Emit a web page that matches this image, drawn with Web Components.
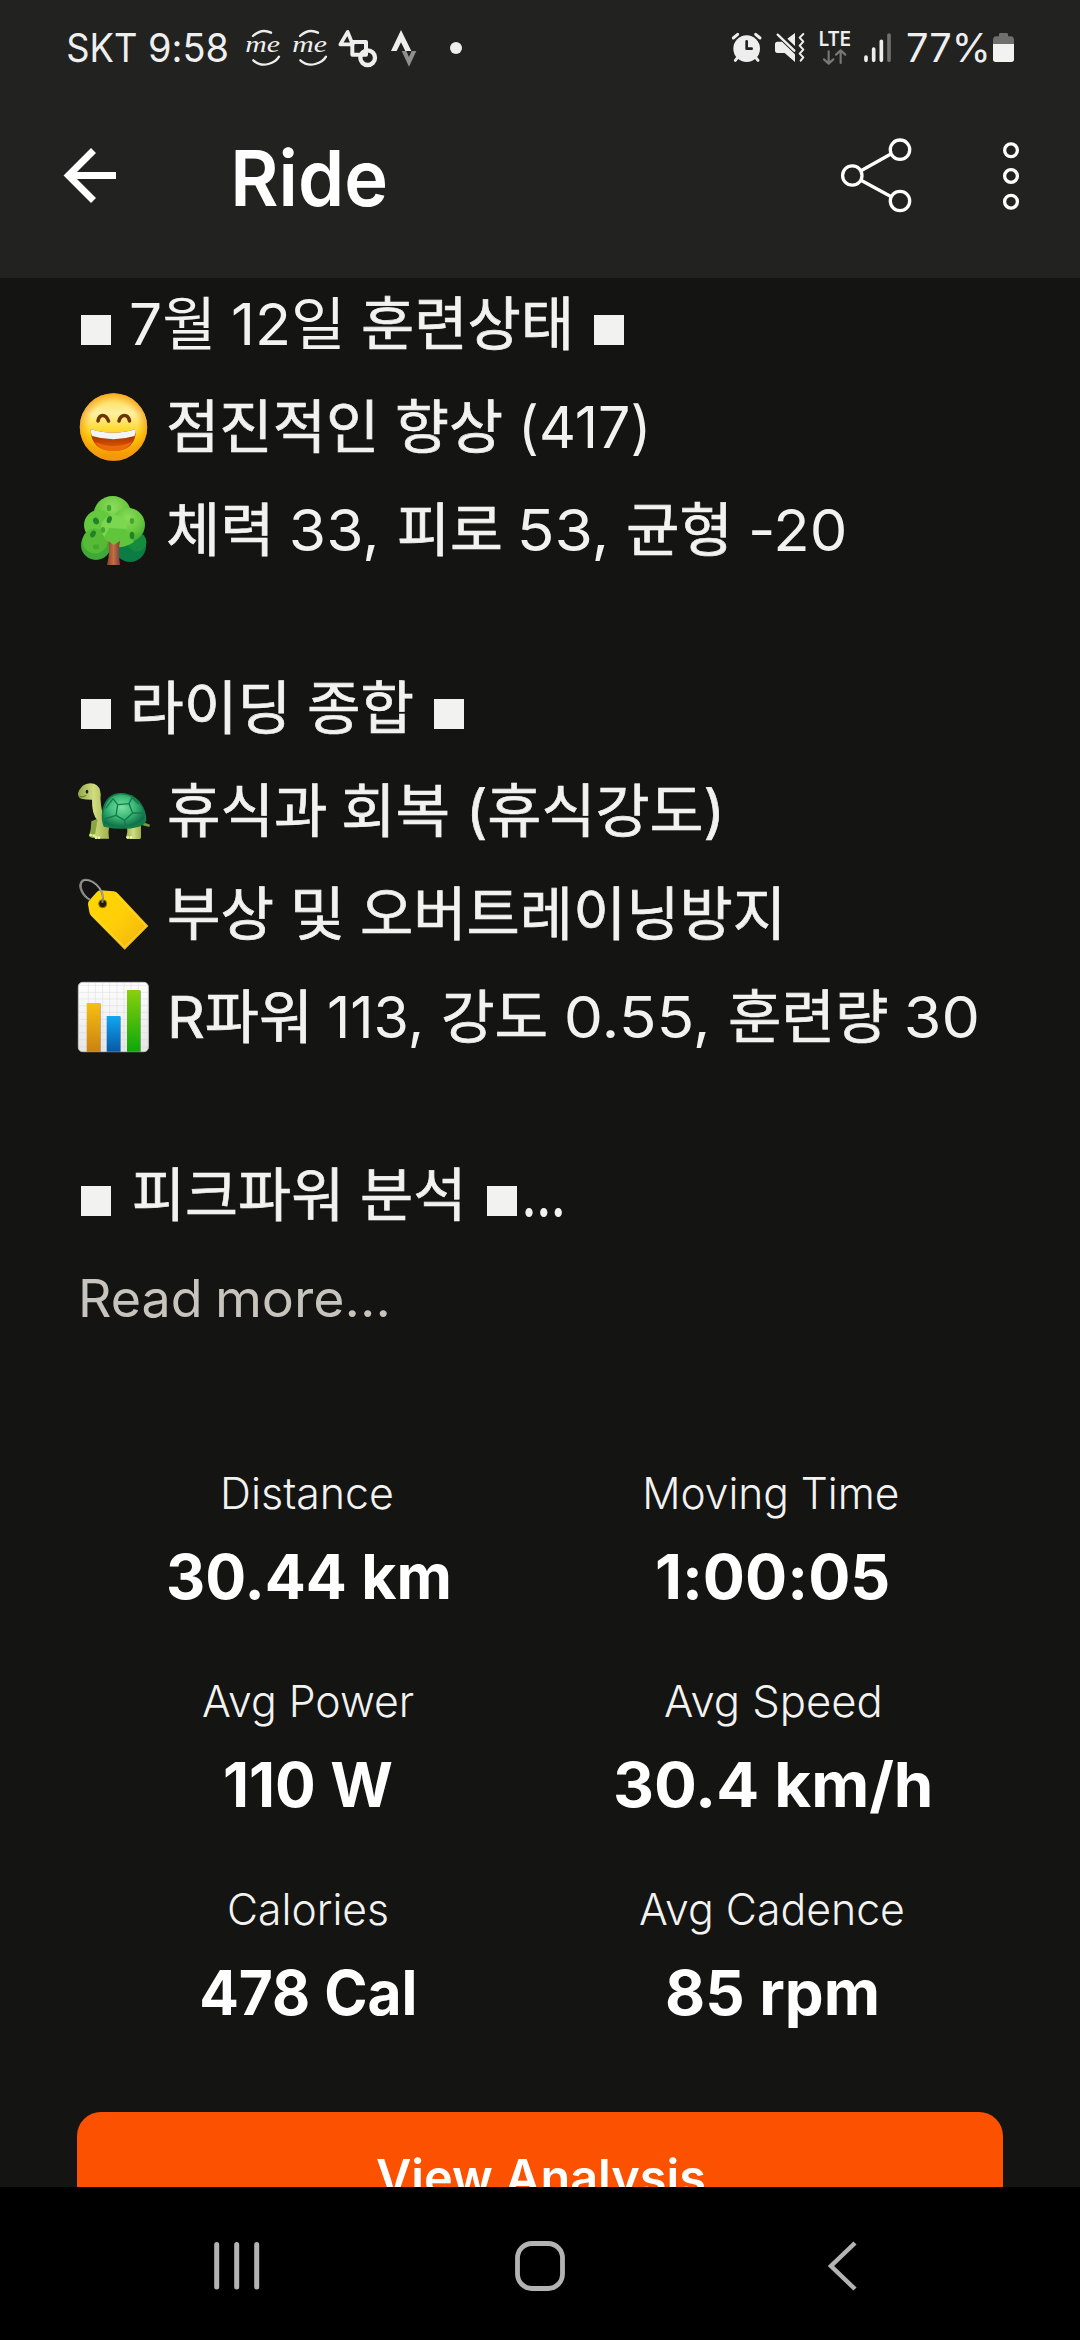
<!DOCTYPE html>
<html lang="ko">
<head>
<meta charset="utf-8">
<title>Ride</title>
<style>
html,body{margin:0;padding:0;background:#141412}
body{width:1080px;height:2340px;overflow:hidden;font-family:Inter,"Noto Sans CJK KR",sans-serif}
</style>
</head>
<body>
<ride-app></ride-app>
<script>
const FAMILY = 'Inter,"Noto Sans CJK KR",sans-serif';
const ctx = document.createElement('canvas').getContext('2d');

// A run of text whose box is its ink: width from "w", bottom edge on the baseline.
class FitText extends HTMLElement {
  connectedCallback() {
    if (this.shadowRoot) return;
    const root = this.attachShadow({ mode: 'open' });
    const size = +this.getAttribute('size') || 58;
    const weight = this.getAttribute('weight') || 400;
    const family = this.getAttribute('family') || FAMILY;
    const w = +this.getAttribute('w');
    const gap = +this.getAttribute('gap') || 0;
    const h = Math.round(size * 0.727);
    ctx.font = `${weight} ${size}px ${family}`;
    const text = this.textContent;
    const m = ctx.measureText(text);
    const ink = m.actualBoundingBoxLeft + m.actualBoundingBoxRight;
    const s = w / ink;
    const ty = h / 2 - (m.fontBoundingBoxAscent - m.fontBoundingBoxDescent) / 2;
    // Hangul strokes are thinner than the Latin ones at the same weight.
    const stroke = /[가-힣]/.test(text) && !/[0-9]/.test(text) ? '.7px' : '0';
    root.innerHTML = `<style>
      :host{display:block;flex:none;width:${w}px;height:${h}px;margin-left:${gap}px}
      span{display:block;width:max-content;white-space:pre;font:${weight} ${size}px/${h}px ${family};
        font-feature-settings:"calt" 0;-webkit-text-stroke:${stroke} currentColor;transform-origin:0 0;
        transform:translate(${(m.actualBoundingBoxLeft * s).toFixed(2)}px,${ty.toFixed(2)}px) scaleX(${s.toFixed(4)})}
    </style><span><slot></slot></span>`;
  }
}

const ICONS = {
  me: `<g fill="none" stroke="#eee" stroke-width="7" stroke-linecap="round"><path d="M609 78Q635 54 663 68"/><path d="M610 151Q630 169 655 162Q678 156 687 140"/></g>
    <text x="586" y="126" textLength="104" lengthAdjust="spacingAndGlyphs" font-family="Liberation Serif" font-style="italic" font-size="70" fill="#eee">me</text>`,
  shapes: `<g fill="none" stroke="#eee" stroke-linejoin="round"><path stroke-width="11" d="M893 66L871 103H908Z"/><rect stroke-width="12" x="907" y="96" width="41" height="38"/><circle stroke-width="13" cx="953" cy="143" r="22"/></g>`,
  strava: `<path fill="#8f8f8e" d="M1056 123H1070L1078 141L1086 123H1100L1078 170Z"/><path fill="#eee" d="M1054 60L1085 123H1067L1054 97L1041 123H1024Z"/>`,
  dot: `<circle cx="1218" cy="114" r="18" fill="#eee"/>`,
  alarm: `<g stroke="#eee" stroke-width="9" stroke-linecap="round"><path d="M100 84L113 73M180 84L167 73M115 140L106 151M165 140L174 151"/></g><circle cx="140" cy="116" r="40" fill="#eee"/><path d="M140 94V116H155" fill="none" stroke="#222220" stroke-width="8" stroke-linecap="round" stroke-linejoin="round"/>`,
  mute: `<path fill="#eee" d="M285 69V108L262 86ZM232 95H246L285 133V156L254 129H232Q225 129 225 121V103Q225 95 232 95Z"/><path stroke="#eee" stroke-width="7" stroke-linecap="round" d="M233 74L283 122"/><path fill="none" stroke="#eee" stroke-width="6" stroke-linecap="round" stroke-linejoin="round" d="M310 72L299 83L310 95L299 107L310 119L299 131L310 142L302 152"/>`,
  lte: `<text x="357" y="109" textLength="97" lengthAdjust="spacingAndGlyphs" font-family="Inter" font-weight="600" font-size="59" fill="#eee">LTE</text><path fill="none" stroke="#777775" stroke-width="6.5" stroke-linecap="round" stroke-linejoin="round" d="M387 124V160M373 148L387 161L401 148M423 159V122M409 134L423 121L437 134"/>`,
  signal: `<g stroke-width="11" stroke-linecap="round" stroke="#eee"><path d="M498 141V151M521 117V151M544 94V151"/><path stroke="#6f6f6d" d="M567 75V151"/></g>`,
  battery: `<path fill="#6f6f6d" d="M897 73Q897 69 901 69H920Q924 69 924 73V79H932Q942 80 942 90V102H879V90Q879 80 889 79H897Z"/><path fill="#f2f2f2" d="M879 102H942V148Q942 156 934 156H887Q879 156 879 148Z"/>`,
  back: `<path fill="none" stroke="#fff" stroke-width="7" d="M51.500 2.500L26.500 27.500L51.500 52.500" transform="translate(-22 -1)"/><path stroke="#fff" stroke-width="7" d="M6 26.500H52"/>`,
  share: `<g fill="none" stroke="#fff" stroke-width="3.300"><circle cx="11.300" cy="37.500" r="9.700"/><circle cx="59" cy="11.700" r="9.700"/><circle cx="59" cy="63" r="9.700"/><path d="M20 32.700L50.300 15.800M20 42.200L50.300 58.700"/></g>`,
  more: `<g fill="none" stroke="#fff" stroke-width="3.300"><circle cx="8" cy="8.300" r="6.400"/><circle cx="8" cy="34" r="6.400"/><circle cx="8" cy="59.700" r="6.400"/></g>`,
  recents: `<path stroke="#b3b3b3" stroke-width="5" stroke-linecap="round" d="M2.700 3.500V46M22.700 3.500V46M42.700 3.500V46"/>`,
  home: `<rect x="2.500" y="2.500" width="45" height="45" rx="14.500" fill="none" stroke="#b3b3b3" stroke-width="4.800"/>`,
  navback: `<path fill="none" stroke="#b3b3b3" stroke-width="4.500" d="M28 2L4 25L28 48"/>`,
  smile: `<defs><linearGradient id="a" x2="0" y2="1"><stop stop-color="#ffd94a"/><stop offset=".3" stop-color="#fff0a0"/><stop offset=".62" stop-color="#ffd20a"/><stop offset="1" stop-color="#f08a00"/></linearGradient><radialGradient id="e" r=".5"><stop offset=".72" stop-color="#f8a010" stop-opacity="0"/><stop offset="1" stop-color="#f59a10" stop-opacity=".75"/></radialGradient><linearGradient id="m" x2="0" y2="1"><stop stop-color="#8c1e00"/><stop offset="1" stop-color="#e86400"/></linearGradient></defs>
    <circle cx="35.500" cy="36" r="33.700" fill="url(#a)"/><circle cx="35.500" cy="36" r="33.700" fill="url(#e)"/>
    <path d="M20 30Q21 24.500 24.700 24.500Q28.500 24.500 30.500 30M41 30Q42.500 24.500 46.500 24.500Q50.500 24.500 51.500 30" fill="none" stroke="#6b3400" stroke-width="3.500" stroke-linecap="round"/>
    <path d="M12.500 38Q35 45.500 58 38Q58 60 35.500 60Q13 60 12.500 38Z" fill="url(#m)"/><path d="M12.500 38Q35 45.500 58 38Q58 42 56.500 45Q35.500 51.500 14 45Q12.500 42 12.500 38Z" fill="#f4f4f4"/><path d="M17 51Q35 59 54 51Q48 60 35.500 60Q23 60 17 51Z" fill="#ee6a08"/>`,
  tree: `<defs><radialGradient id="a" cx=".5" cy=".3" r=".65"><stop stop-color="#8ddc5c"/><stop offset=".65" stop-color="#65c63c"/><stop offset="1" stop-color="#45ae36"/></radialGradient><linearGradient id="t" x2="1"><stop stop-color="#8d3f2c"/><stop offset=".5" stop-color="#c0703e"/><stop offset="1" stop-color="#853744"/></linearGradient></defs>
    <circle cx="52" cy="52" r="16" fill="#0b7c43"/><circle cx="18" cy="51" r="15" fill="#3ea936"/><circle cx="59" cy="48" r="9.500" fill="#158b3d"/>
    <circle cx="34.500" cy="21" r="19" fill="url(#a)"/><circle cx="21" cy="31" r="15" fill="#65c93e"/><circle cx="17" cy="47" r="12.500" fill="#56ba36"/><circle cx="50" cy="31" r="17" fill="url(#a)"/><circle cx="36" cy="34" r="13" fill="#7bd650"/><path d="M26 44Q38 60 56 48L48 35L31 34Z" fill="#61c53b"/>
    <path d="M30.500 47L35.500 51L42 47Q40 56 42 71H29Q32 60 30.500 47Z" fill="url(#t)"/>
    <g fill="#23812b"><ellipse cx="18" cy="27" rx="2.800" ry="3.500" transform="rotate(-30 18 27)"/><ellipse cx="31.500" cy="25.500" rx="2.400" ry="3.700" transform="rotate(20 31 25)"/><ellipse cx="15" cy="40" rx="2.500" ry="3.700" transform="rotate(30 15 40)"/><ellipse cx="54" cy="41.500" rx="2.300" ry="3.700"/></g><g fill="#43a82c"><ellipse cx="31" cy="14" rx="2.200" ry="3.200"/><ellipse cx="54" cy="27" rx="2.200" ry="3"/><ellipse cx="25" cy="36" rx="2.200" ry="3"/><ellipse cx="18" cy="53" rx="3" ry="2.400"/></g>`,
  turtle: `<defs><linearGradient id="n" x2="1"><stop stop-color="#90a848"/><stop offset=".5" stop-color="#d2dc80"/><stop offset="1" stop-color="#9bb14a"/></linearGradient><radialGradient id="s" cx=".45" cy=".4" r=".62"><stop stop-color="#79e2a0"/><stop offset=".5" stop-color="#3cbb79"/><stop offset="1" stop-color="#0d7047"/></radialGradient></defs>
    <path d="M250 487L270 494L268 501L248 496Z" fill="#789d3a"/>
    <path d="M94 484L112 476L108 530Q98 538 87 529Q94 510 94 484Z" fill="#8ba544"/>
    <path d="M196 488H243V530Q244 537 236 537H202Q196 533 200 525Q205 510 196 488Z" fill="url(#n)"/>
    <path d="M54 400Q57 388 68 377Q82 366 102 371Q121 378 122 402Q119 430 132 478L148 502Q144 512 147 536H106Q100 532 106 520L112 480Q95 462 96 419Q76 419 64 416Q54 414 54 400Z" fill="url(#n)"/>
    <path d="M131 500Q122 478 127 450Q139 398 184 399Q230 401 250 442Q260 464 259 482Q253 494 237 500Q190 513 131 500Z" fill="#147c4c"/>
    <path d="M132 490Q127 465 134 445Q147 403 185 403Q225 406 246 443Q254 463 251 478Q227 500 187 500Q151 500 132 490Z" fill="url(#s)"/>
    <path d="M173 434L207 431L218 459L194 481L168 466ZM173 434L159 416M207 431L216 413M218 459L250 459M194 481L196 502M168 466L134 477M159 416L137 445M216 413L237 433" fill="none" stroke="#18784b" stroke-width="4"/>
    <ellipse cx="81" cy="395" rx="4" ry="5.500" fill="#2b1d0c"/><path d="M58 410Q70 413 79 406" stroke="#5f7327" stroke-width="3" fill="none"/><g fill="#ecf7a0"><circle cx="92" cy="525" r="4"/><circle cx="101" cy="527" r="4"/><circle cx="108" cy="533" r="4"/><circle cx="117" cy="533" r="4"/><circle cx="203" cy="532" r="4"/><circle cx="213" cy="532" r="4"/></g>`,
  tag: `<defs><linearGradient id="a" x1="0" x2="1" y1="0" y2="1"><stop stop-color="#ffd800"/><stop offset=".5" stop-color="#ffce08"/><stop offset="1" stop-color="#eeb010"/></linearGradient></defs>
    <path d="M121 691L161 694Q169 695 175 702L265 798L194 869L94 768Q89 764 88 756L84 733Q83 726 89 720L110 697Q115 691 121 691Z" fill="url(#a)"/><path d="M165 701L258 798L194 861L97 763" fill="none" stroke="#ffe16a" stroke-width="2"/>
    <circle cx="128" cy="731" r="12" fill="#201a10" stroke="#9a7508" stroke-width="3"/><path d="M91 720C66 708 52 676 67 662C88 648 138 685 127 728" fill="none" stroke="#858585" stroke-width="6"/><path d="M90 718C70 706 56 676 69 664C88 652 132 685 128 715" fill="none" stroke="#ccc" stroke-width="1.500"/>`,
  chart: `<defs><linearGradient id="p" x2="0" y2="1"><stop stop-color="#fff"/><stop offset="1" stop-color="#e6e6e8"/></linearGradient><linearGradient id="o" x2="0" y2="1"><stop stop-color="#f7bf12"/><stop offset="1" stop-color="#cb8210"/></linearGradient><linearGradient id="b" x2="0" y2="1"><stop stop-color="#11a7f0"/><stop offset="1" stop-color="#0758a6"/></linearGradient><linearGradient id="g" x2="0" y2="1"><stop stop-color="#88d00d"/><stop offset="1" stop-color="#0da70b"/></linearGradient></defs>
    <rect x="55" y="967" width="210" height="208" rx="13" fill="url(#p)" stroke="#c4c4c6" stroke-width="3"/><path d="M85 968V1174M106 968V1174M128 968V1174M149 968V1174M171 968V1174M192 968V1174M213 968V1174M235 968V1174M56 976H264M56 997H264M56 1017H264M56 1037H264M56 1057H264M56 1078H264M56 1098H264M56 1118H264M56 1139H264M56 1160H264" stroke="#d9d9dc" stroke-width="1.500"/>
    <path fill="#666" opacity=".5" d="M83 1031H123V1175H83ZM144 1070H183V1175H144ZM204 993H243V1175H204Z"/><path fill="url(#o)" d="M80 1029H121V1175H80Z"/><path fill="url(#b)" d="M140 1068H181V1175H140Z"/><path fill="url(#g)" d="M201 990H241V1175H201Z"/>`
};

class UiIcon extends HTMLElement {
  connectedCallback() {
    if (this.shadowRoot) return;
    const a = n => this.getAttribute(n);
    this.attachShadow({ mode: 'open' }).innerHTML = `<style>
      :host{display:block;flex:none;width:${a('w')}px;height:${a('h')}px;margin-left:${a('gap') || 0}px}
      svg{display:block;width:100%;height:100%;overflow:visible}</style>
      <svg viewBox="${a('box') || `0 0 ${a('w')} ${a('h')}`}" preserveAspectRatio="none" aria-hidden="true">${ICONS[a('name')]}</svg>`;
  }
}

class StatusBar extends HTMLElement {
  connectedCallback() {
    const st = (name, x, w, gap) => `<ui-icon name="${name}" w="${(w / 3).toFixed(2)}" h="80" gap="${gap}" box="${x} 0 ${w} 240"></ui-icon>`;
    this.attachShadow({ mode: 'open' }).innerHTML = `<style>
      :host{display:flex;justify-content:space-between;height:80px;padding:10px 66px 0 67.700px;color:#efefef}
      div{display:flex;align-items:flex-end}
      fit-text{margin-bottom:28px}</style>
      <div><fit-text size="39.500" family="Inter" weight="370" w="68">SKT</fit-text><fit-text size="39.500" family="Inter" weight="370" w="77.700" gap="14.300">9:58</fit-text>
      ${st('me', 585, 108, 17.3)}${st('me', 585, 108, 11)}${st('shapes', 864, 117, 10)}${st('strava', 1024, 76, 14.3)}${st('dot', 1200, 36, 33.3)}</div>
      <div>${st('alarm', 96, 88, 0)}${st('mute', 225, 89, 13.7)}${st('lte', 358, 95, 14.7)}${st('signal', 492, 81, 13)}<fit-text size="39" family="Inter" weight="400" w="79.400" gap="16.300">77%</fit-text>${st('battery', 879, 63, 6.3)}</div>`;
  }
}

class TopBar extends HTMLElement {
  connectedCallback() {
    this.attachShadow({ mode: 'open' }).innerHTML = `<style>
      :host{display:block;flex:none;height:278px;background:#222220;color:#fff}
      .bar{display:flex;align-items:center;height:171px;padding:0 61px 0 64px}
      .grow{flex:1}
      fit-text{margin-top:4px}</style>
      <status-bar></status-bar>
      <div class="bar"><ui-icon name="back" w="52" h="53"></ui-icon><fit-text size="77" weight="600" w="150.500" gap="119">Ride</fit-text><span class="grow"></span>
      <ui-icon name="share" w="70.300" h="75"></ui-icon><ui-icon name="more" w="16" h="68" gap="92"></ui-icon></div>`;
  }
}

class NoteLine extends HTMLElement {
  connectedCallback() {
    this.attachShadow({ mode: 'open' }).innerHTML = `<style>
      :host{display:flex;align-items:flex-end;box-sizing:border-box;height:103px;padding:0 0 36px 78px;color:#f2f2f0}
      :host([blank]){height:75px}
      :host([more]){height:101px;color:#c6c4bd}
      ::slotted(ui-icon){margin-bottom:-14px}</style><slot></slot>`;
  }
}

// The square bullet that brackets a heading.
class SquareMark extends HTMLElement {
  connectedCallback() {
    this.attachShadow({ mode: 'open' }).innerHTML = `<style>
      :host{display:flex;justify-content:center;flex:none;width:30.300px;height:30px;background:#f2f2f0;margin-left:${this.getAttribute('gap')}px}
      span{font:20px/30px "DejaVu Sans",sans-serif;color:#f2f2f0}</style><span>■</span>`;
  }
}

class RideStat extends HTMLElement {
  connectedCallback() {
    const a = n => this.getAttribute(n);
    this.attachShadow({ mode: 'open' }).innerHTML = `<style>
      :host{display:flex;flex-direction:column;align-items:center;gap:45px;height:122px}
      .l{color:#f2f2f0}.v{color:#fff}</style>
      <fit-text class="l" size="44" weight="350" w="${a('lw')}">${a('label')}</fit-text>
      <fit-text class="v" size="61.500" weight="650" w="${a('vw')}">${a('value')}</fit-text>`;
  }
}

class ActionButton extends HTMLElement {
  connectedCallback() {
    this.attachShadow({ mode: 'open' }).innerHTML = `<style>
      :host{display:flex;justify-content:center;align-items:flex-start;box-sizing:border-box;flex:none;height:132px;margin:97px 77px 0;padding-top:47px;border-radius:24px;background:#fc5200;color:#fff}
      </style><slot></slot>`;
  }
}

class NavBar extends HTMLElement {
  connectedCallback() {
    this.attachShadow({ mode: 'open' }).innerHTML = `<style>
      :host{display:flex;align-items:center;box-sizing:border-box;flex:none;height:153px;background:#000;padding:5px 0 0 214px}
      </style><ui-icon name="recents" w="45.500" h="49.500"></ui-icon><ui-icon name="home" w="50" h="50" gap="255"></ui-icon><ui-icon name="navback" w="30" h="50" gap="262.500"></ui-icon>`;
  }
}

class RideApp extends HTMLElement {
  connectedCallback() {
    const t = (s, w, gap) => `<fit-text w="${w}" gap="${gap}">${s}</fit-text>`;
    const sq = gap => `<square-mark gap="${gap}"></square-mark>`;
    const em = (n, box) => `<ui-icon name="${n}" w="71" h="71"${box ? ` box="${box}"` : ''}></ui-icon>`;
    this.attachShadow({ mode: 'open' }).innerHTML = `<style>
      :host{display:flex;flex-direction:column;width:1080px;height:2340px;background:#141412}
      main{flex:1;min-height:0;overflow:hidden}
      .stats{display:grid;grid-template-columns:1fr 1fr;row-gap:86px;margin:124px 76px 0}</style>
      <top-bar></top-bar>
      <main>
        <note-line>${sq(2.7)}${t('7월', 79.6, 20)}${t('12일', 107, 22.4)}${t('훈련상태', 205.7, 23.3)}${sq(24.7)}</note-line>
        <note-line>${em('smile')}${t('점진적인', 205, 20.3)}${t('향상', 103.7, 23.7)}${t('(417)', 121.3, 22)}</note-line>
        <note-line>${em('tree')}${t('체력', 100, 19)}${t('33,', 82.7, 24)}${t('피로', 101.5, 24.3)}${t('53,', 83.5, 21)}${t('균형', 98.6, 22.7)}${t('-20', 92.7, 25.7)}</note-line>
        <note-line blank></note-line>
        <note-line>${sq(2.7)}${t('라이딩', 150.7, 23)}${t('종합', 103.7, 24.3)}${sq(20.9)}</note-line>
        <note-line>${em('turtle', '54 345 213 213')}${t('휴식과', 157, 20)}${t('회복', 103.8, 17.7)}${t('(휴식강도)', 246.7, 24.1)}</note-line>
        <note-line>${em('tag', '54 654 213 213')}${t('부상', 103.7, 20)}${t('및', 45.6, 22)}${t('오버트레이닝방지', 416.7, 21.4)}</note-line>
        <note-line>${em('chart', '54 963 213 213')}${t('R파워', 133.6, 22.7)}${t('113,', 90.5, 24)}${t('강도', 102.8, 23.7)}${t('0.55,', 138.7, 21)}${t('훈련량', 157, 24)}${t('30', 70.3, 20)}</note-line>
        <note-line blank></note-line>
        <note-line>${sq(2.7)}${t('피크파워', 202.9, 23)}${t('분석', 98, 25.1)}${sq(26.7)}<fit-text w="37" gap="8" weight="600">...</fit-text></note-line>
        <note-line more><fit-text size="52" weight="400" w="116.700" gap="3.700">Read</fit-text><fit-text size="52" weight="400" w="167.800" gap="20.600">more...</fit-text></note-line>
        <section class="stats">
          <ride-stat label="Distance" lw="168.500" value="30.44 km" vw="281"></ride-stat>
          <ride-stat label="Moving Time" lw="252" value="1:00:05" vw="231"></ride-stat>
          <ride-stat label="Avg Power" lw="210.400" value="110 W" vw="167"></ride-stat>
          <ride-stat label="Avg Speed" lw="214.300" value="30.4 km/h" vw="315"></ride-stat>
          <ride-stat label="Calories" lw="158.400" value="478 Cal" vw="212"></ride-stat>
          <ride-stat label="Avg Cadence" lw="263.400" value="85 rpm" vw="210"></ride-stat>
        </section>
        <action-button><fit-text size="49" weight="600" w="327">View Analysis</fit-text></action-button>
      </main>
      <nav-bar></nav-bar>`;
  }
}

customElements.define('fit-text', FitText);
customElements.define('ui-icon', UiIcon);
customElements.define('status-bar', StatusBar);
customElements.define('top-bar', TopBar);
customElements.define('note-line', NoteLine);
customElements.define('square-mark', SquareMark);
customElements.define('ride-stat', RideStat);
customElements.define('action-button', ActionButton);
customElements.define('nav-bar', NavBar);
customElements.define('ride-app', RideApp);
</script>
</body>
</html>
